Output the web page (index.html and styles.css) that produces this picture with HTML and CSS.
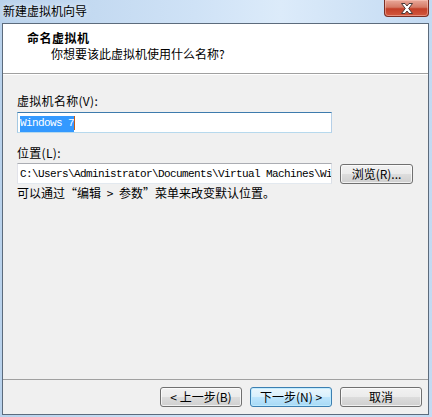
FILE: index.html
```html
<!DOCTYPE html>
<html lang="zh-CN">
<head>
    <meta charset="UTF-8">
    <title>新建虚拟机向导</title>
    <link rel="stylesheet" href="styles.css">
</head>
<body>
    <div class="window">
        <div class="titlebar">
            <span class="title">新建虚拟机向导</span>
            <button class="close-btn" aria-label="关闭">
                <svg width="14" height="11" viewBox="0 0 14 11">
                    <path d="M1.5 0.5h3.5l2 2.5 2-2.5h3.5l-3.8 5 3.8 5h-3.5l-2-2.5-2 2.5h-3.5l3.8-5z" fill="#fff" stroke="#4a3a38" stroke-width="1" stroke-linejoin="round"/>
                </svg>
            </button>
        </div>
        <div class="client">
            <div class="header">
                <div class="header-title">命名虚拟机</div>
                <div class="header-sub">你想要该此虚拟机使用什么名称?</div>
            </div>
            <div class="content">
                <label class="field-label">虚拟机名称(V):</label>
                <div class="textbox focused"><span class="selected">Windows 7</span><span class="caret"></span></div>
                <label class="field-label location-label">位置(L):</label>
                <div class="location-row">
                    <div class="textbox path">C:\Users\Administrator\Documents\Virtual Machines\Wi</div>
                    <button class="btn browse-btn">浏览(R)...</button>
                </div>
                <p class="hint">可以通过“编辑 &gt; 参数”菜单来改变默认位置。</p>
            </div>
            <div class="footer">
                <button class="btn">&lt; 上一步(B)</button>
                <button class="btn default">下一步(N) &gt;</button>
                <button class="btn">取消</button>
            </div>
        </div>
    </div>
</body>
</html>
```

FILE: styles.css
```css
body, html {
    margin: 0;
    width: 432px;
    height: 417px;
    overflow: hidden;
}
body {
    font-family: "Noto Sans CJK SC", "Liberation Sans", sans-serif;
    font-size: 12px;
    color: #000;
}
.window {
    width: 432px;
    height: 417px;
    display: flex;
    flex-direction: column;
    background: linear-gradient(to right, #b9d2ec 0%, #cfe2f6 45%, #dcebfa 65%, #c3daf2 100%);
}
.titlebar {
    height: 23px;
    display: flex;
    justify-content: space-between;
    align-items: flex-start;
    padding-left: 3px;
}
.title {
    line-height: 20px;
    padding-top: 1px;
    color: #000;
    text-shadow: 0 0 6px rgba(255, 255, 255, 0.9);
}
.close-btn {
    width: 45px;
    height: 17px;
    margin-right: 3px;
    padding: 0;
    border: 1px solid #7a2e24;
    border-top: none;
    border-radius: 0 0 4px 4px;
    background: linear-gradient(#e9a99a 0%, #d57a66 45%, #c33f28 55%, #d2583e 100%);
    box-shadow: inset 0 0 0 1px rgba(255, 210, 200, 0.45);
    display: flex;
    justify-content: center;
    align-items: center;
}
.client {
    margin: 0 3px 2px 2px;
    height: 390px;
    border: 1px solid #5c6b7c;
    background-color: #f0f0f0;
    display: flex;
    flex-direction: column;
}
.header {
    height: 43px;
    padding: 6px 0 0 24px;
    background-color: #fff;
    border-bottom: 1px solid #a0a0a0;
    box-shadow: 0 1px 0 #fff;
}
.header-title {
    font-weight: bold;
    line-height: 16px;
    letter-spacing: 0.5px;
}
.header-sub {
    line-height: 16px;
    padding-left: 24px;
}
.content {
    flex: 1;
    padding: 20px 0 0 14px;
    display: flex;
    flex-direction: column;
    align-items: flex-start;
}
.field-label {
    line-height: 14px;
    margin-bottom: 4px;
    letter-spacing: 0.3px;
}
.location-label {
    margin-top: 13px;
    margin-bottom: 3px;
}
.textbox {
    box-sizing: border-box;
    width: 315px;
    height: 21px;
    padding: 3px 2px 0;
    border: 1px solid #abadb3;
    border-color: #abadb3 #dbdfe6 #e3e9ef #e2e3ea;
    background-color: #fff;
    font-family: "Liberation Mono", monospace;
    font-size: 11px;
    letter-spacing: -0.6px;
    line-height: 14px;
    white-space: nowrap;
    overflow: hidden;
    display: flex;
}
.textbox.focused {
    border-color: #3d7bad #b5cfe7 #b7d9ed #a4c9e3;
}
.selected {
    background-color: #3399ff;
    color: #fff;
}
.caret {
    width: 1px;
    height: 14px;
    background-color: #c45a16;
}
.location-row {
    display: flex;
    gap: 8px;
    align-items: flex-start;
}
.btn {
    box-sizing: border-box;
    height: 20px;
    width: 82px;
    padding: 0;
    border: 1px solid #707070;
    border-radius: 3px;
    background: linear-gradient(#f2f2f2 0%, #ebebeb 50%, #dddddd 50%, #cfcfcf 100%);
    box-shadow: inset 0 0 0 1px rgba(255, 255, 255, 0.7);
    font-family: "Noto Sans CJK SC", "Liberation Sans", sans-serif;
    font-size: 12px;
    line-height: 16px;
    color: #000;
}
.browse-btn {
    width: 73px;
    height: 20px;
    margin-top: 1px;
}
.btn.default {
    border-color: #3c7fb1;
    background: linear-gradient(#eaf6fd 0%, #d9f0fc 50%, #bee6fd 50%, #a7d9f5 100%);
    box-shadow: inset 0 0 0 1px rgba(190, 235, 255, 0.9);
}
.hint {
    margin: 2px 0 0;
    line-height: 14px;
    word-spacing: 3px;
}
.footer {
    height: 27px;
    padding: 7px 6px 0 0;
    border-top: 1px solid #a0a0a0;
    display: flex;
    justify-content: flex-end;
    gap: 8px;
}
```
